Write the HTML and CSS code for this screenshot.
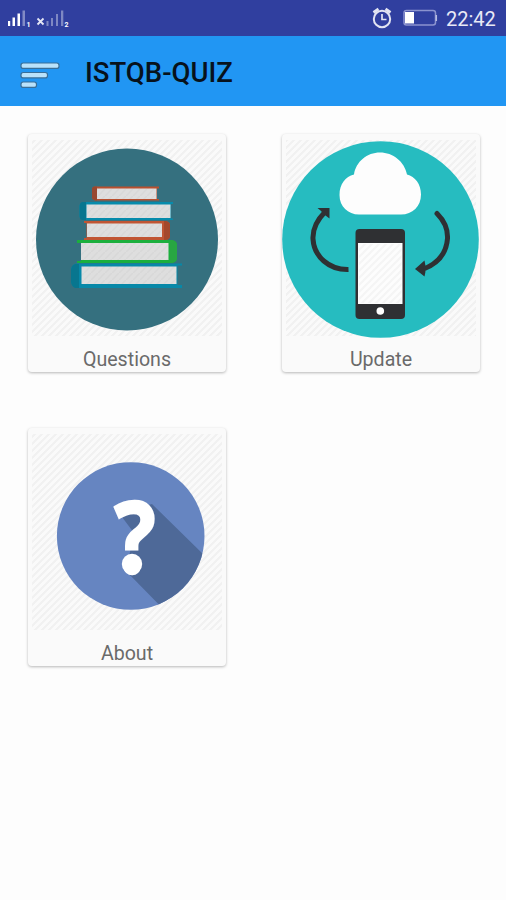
FILE: index.html
```html
<!DOCTYPE html>
<html lang="en">
<head>
<meta charset="utf-8">
<title>ISTQB-QUIZ</title>
<link rel="stylesheet" href="styles.css">
</head>
<body>
<div class="status">
  <svg class="signals" width="64" height="24" viewBox="7 6 64 24">
    <g fill="#fff">
      <path d="M8 21h2.200v5H8zM12.500 17.500h2.500v8.500h-2.500zM17.500 13.500h2.500v12.500h-2.500z"/>
      <path d="M22.500 10.500h2.500V26h-2.500z" opacity=".4"/>
      <path d="M46.500 21h2v5h-2zM51 18h2v8h-2zM56 14h2v12h-2zM61 10.500h2.300V26H61z" opacity=".38"/>
      <text x="26.500" y="26.500">1</text>
      <text x="64.500" y="26.500">2</text>
    </g>
    <path d="M37.500 18.500l6 6m0-6l-6 6" stroke="#e4e6f5" stroke-width="1.800"/>
  </svg>
  <div class="status-right">
    <svg width="22" height="24" viewBox="371 6 22 24" fill="none" stroke="#e2e4f2">
      <circle cx="382" cy="19" r="8.200" stroke-width="2"/>
      <path d="M373.500 12.500l5-3.500M390.500 12.500l-5-3.500" stroke-width="2.800"/>
      <path d="M382 14v5.500h4.500" stroke-width="1.700"/>
    </svg>
    <svg width="35" height="24" viewBox="403 6 35 24">
      <rect x="404" y="10.500" width="31.500" height="14.500" rx="2.500" fill="none" stroke="#8b93cf" stroke-width="1.500"/>
      <path d="M436.300 15v6" stroke="#b7bce2" stroke-width="1.500"/>
      <path d="M405 12h9v11.500h-9z" fill="#fff"/>
    </svg>
    <span class="clock">22:42</span>
  </div>
</div>
<header class="bar">
  <svg width="42" height="30" viewBox="19 60 42 30" fill="#b9e2fb" stroke="#396f99" stroke-width="1.200">
    <rect x="21" y="63" width="38" height="5.400" rx="2.200"/>
    <rect x="21" y="72.500" width="26.500" height="5.400" rx="2.200"/>
    <rect x="21" y="82" width="15.500" height="5.400" rx="2.200"/>
  </svg>
  <h1>ISTQB-QUIZ</h1>
</header>
<main class="grid">
  <section class="card">
    <svg width="198" height="212" viewBox="28 134 198 212">
      <defs>
        <pattern id="hatch" width="7" height="7" patternUnits="userSpaceOnUse">
          <path d="M-1 8L8 -1M-1 1L1 -1M6 8L8 6" stroke="#f1f1f1" stroke-width="2"/>
        </pattern>
        <pattern id="paper" width="7" height="7" patternUnits="userSpaceOnUse">
          <path d="M0 0h7v7H0z" fill="#dedede"/>
          <path d="M-1 8L8 -1" stroke="#d8d8d8" stroke-width="1.500"/>
        </pattern>
      </defs>
      <path d="M32 140h190v196H32z" fill="url(#hatch)"/>
      <circle cx="127" cy="239.500" r="91" fill="#35707f"/>
      <path d="M95 186.500h64v2h-2v10.500h2v1.500H95q-3-1-3-3v-8q0-3 3-3z" fill="#b9502f"/>
      <path d="M95 186.500h2v14h-2q-3-1-3-3v-8q0-3 3-3z" fill="#99482f"/>
      <path d="M83 202h90v2h-2v14.500h2V220H83q-3.500-1-3.500-4v-10q0-3 3.500-4z" fill="#078bab"/>
      <path d="M82 202h4v18h-4q-2.500-1-2.500-4v-10q0-3 2.500-4z" fill="#08768f"/>
      <path d="M84 221h82q4 1 4 4v11q0 3-4 4H84v-2h2.500v-15H84z" fill="#c05533"/>
      <path d="M164 221h2q4 1 4 4v11q0 3-4 4h-2z" fill="#a4482c"/>
      <path d="M77 240h95q5 1 5 5v13q0 4-5 5H77v-2h4v-18h-4z" fill="#1baf3d"/>
      <path d="M170 240h2q5 1 5 5v13q0 4-5 5h-2z" fill="#28a642"/>
      <path d="M76 263.500h106v2h-4.500v19.500h4.500v3H76q-5-2-5-7v-11q0-5 5-6.500z" fill="#0788a8"/>
      <path d="M75 264h4v24h-4q-4-2-4-7v-11q0-4 4-6z" fill="#08768f"/>
      <path d="M97 188.500h59.500v10.500H97zM86.500 204.500h84V218h-84zM87 223.500h75V237H87zM81 243h87.500v17H81zM81.500 266.500h95V284h-95z" fill="url(#paper)"/>
    </svg>
    <span class="label">Questions</span>
  </section>
  <section class="card">
    <svg width="198" height="212" viewBox="282 134 198 212">
      <path d="M286 140h190v196H286z" fill="url(#hatch)"/>
      <circle cx="380.500" cy="239.500" r="98.300" fill="#26bcc0"/>
      <path d="M359 214.500c-11 0-19.500-8-19.500-19.500 0-11 6-18.500 14.500-20.500 2-13 13-22 26-22s24.500 9 27 22c8 2 14 9.500 14 20 0 12-8.500 20-20 20z" fill="#fdfdfd"/>
      <g fill="none" stroke="#2f3033" stroke-width="5">
        <path d="M348.500 269.500C329 270 314 256.500 313 239c-.5-10 4-19 12-27"/>
        <path d="M437 213.500c7 7 11 15 10.500 25-1 14-9 25-25 31" stroke-linecap="round"/>
      </g>
      <path d="M317.500 208h12v10.500l-4-3-5-5zM415 269l9.500-8.500 1 5.500-2 2.500 2 3-1 5z" fill="#2f3033"/>
      <rect x="355.500" y="229" width="49.500" height="90" rx="4" fill="#2f3033"/>
      <path d="M358 243h44.500v61H358z" fill="#fdfdfd"/>
      <path d="M359 244h42.500v59H359z" fill="url(#hatch)" opacity=".7"/>
      <circle cx="380.300" cy="311" r="3.800" fill="#fff"/>
    </svg>
    <span class="label">Update</span>
  </section>
  <section class="card">
    <svg width="198" height="212" viewBox="28 428 198 212">
      <defs><clipPath id="disc"><circle cx="130.700" cy="536" r="73.800"/></clipPath></defs>
      <path d="M32 434h190v196H32z" fill="url(#hatch)"/>
      <circle cx="130.700" cy="536" r="73.800" fill="#6685c1"/>
      <path d="M119 513l33-9 60 59v60h-35L126 571l8-38z" fill="#4e6998" clip-path="url(#disc)"/>
      <text class="mark" transform="translate(135 573) scale(.87 1)">?</text>
      <circle cx="132" cy="564" r="10.200" fill="#fff"/>
    </svg>
    <span class="label">About</span>
  </section>
</main>
</body>
</html>
```
FILE: styles.css
```css
* { box-sizing: border-box; }
body {
  margin: 0;
  min-height: 900px;
  background: #fdfdfd;
  font-family: Roboto, "Liberation Sans", sans-serif;
}
svg { display: block; flex: none; }
.status {
  display: flex;
  justify-content: space-between;
  height: 36px;
  padding: 6px 11px 0 7px;
  background: #303f9f;
}
.signals text { font: bold 7px Roboto, sans-serif; }
.status-right { display: flex; gap: 10px; }
.clock {
  margin-left: -2px;
  color: #e9eaf6;
  font-size: 20px;
  line-height: 26px;
  width: 49px;
  white-space: nowrap;
}
.bar {
  display: flex;
  align-items: flex-start;
  gap: 24px;
  height: 70px;
  padding: 24px 19px 0;
  background: #2196f3;
}
h1 {
  margin: -3px 0 0;
  color: #07121c;
  font-size: 27.500px;
  font-weight: 500;
  line-height: 31px;
}
.grid {
  display: grid;
  grid-template-columns: 198px 198px;
  gap: 56px;
  padding: 28px;
}
.card {
  display: flex;
  flex-direction: column;
  align-items: center;
  height: 238px;
  border-radius: 4px;
  background: #fafafa;
  box-shadow: 0 1px 3px rgba(0, 0, 0, .28);
}
.label {
  color: #6a6a6a;
  font-size: 19.600px;
  line-height: 27px;
}
.mark {
  fill: #fff;
  stroke: #fff;
  stroke-width: 2.500px;
  font: bold 99px "Open Sans", sans-serif;
  text-anchor: middle;
}
```
